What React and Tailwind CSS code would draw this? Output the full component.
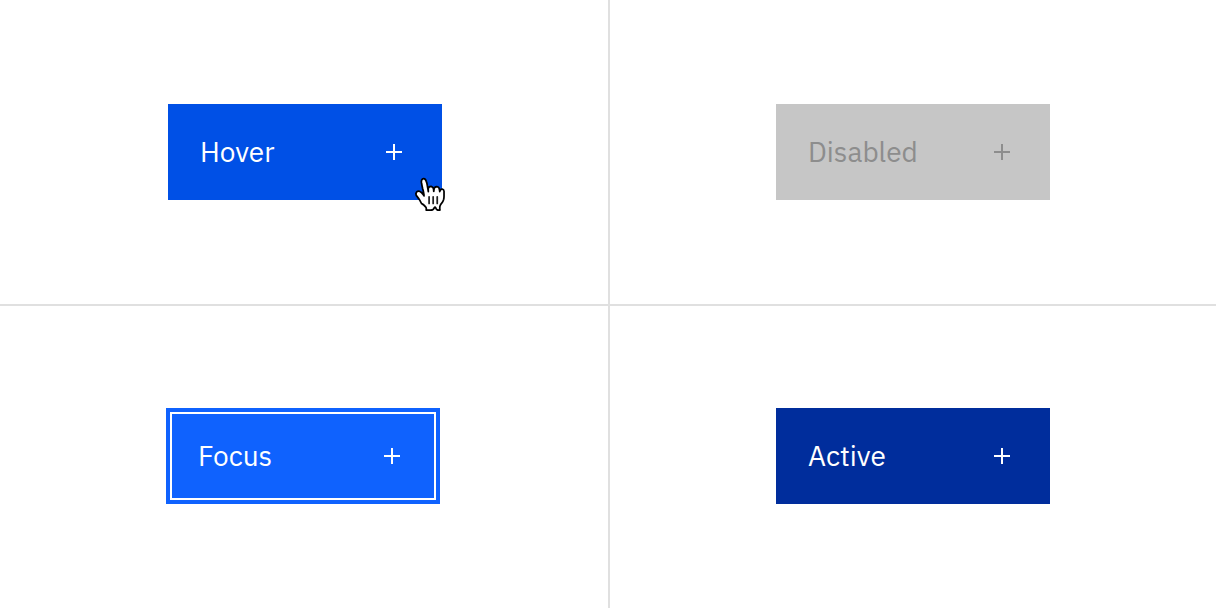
function PlusIcon() {
  return (
    <svg className="size-4 shrink-0" viewBox="0 0 16 16" fill="currentColor" aria-hidden="true">
      <path d="M7 0h2v7h7v2H9v7H7V9H0V7h7z" />
    </svg>
  );
}

function HandCursor() {
  return (
    <svg
      className="pointer-events-none absolute top-18 left-[247px] h-9 w-8"
      viewBox="8 7 16 18"
      fill="none"
      aria-hidden="true"
    >
      <g transform="translate(.3 -.3) scale(.97 1.03)">
        <path
          d="m11.3 20.4c-.3-.4-.6-1.1-1.2-2-.3-.5-1.2-1.5-1.5-1.9-.2-.4-.2-.6-.1-1 .1-.6.7-1.1 1.4-1.1.5 0 1 .4 1.4.7.2.2.5.6.7.8.2.2.2.3.4.5.2.3.3.5.2.1-.1-.5-.2-1.3-.4-2.1-.1-.6-.2-.7-.3-1.1-.1-.5-.2-.8-.3-1.3-.1-.3-.2-1.1-.3-1.5-.1-.5-.1-1.4.3-1.8.3-.3.9-.4 1.3-.2.5.3.8 1 .9 1.3.2.5.4 1.2.5 2 .2 1 .5 2.5.5 2.8 0-.4-.1-1.1 0-1.5.1-.3.3-.7.7-.8.3-.1.6-.1.9-.1.3.1.6.3.8.5.4.6.4 1.9.4 1.8.1-.4.1-1.2.3-1.6.1-.2.5-.4.7-.5.3-.1.7-.1 1 0 .2 0 .6.3.7.5.2.3.3 1.3.4 1.7 0 .1.1-.4.3-.7.4-.6 1.8-.8 1.9.6v1.1 1.2c0 .4-.1 1.3-.2 1.7-.1.3-.4 1-.7 1.4 0 0-1.1 1.2-1.2 1.8-.1.6-.1.6-.1 1s.1.9.1.9-.8.1-1.2 0-.9-.8-1-1.1c-.2-.3-.5-.3-.7 0-.2.4-.7 1.1-1.1 1.1-.7.1-2.1 0-3.1 0 0 0 .2-1-.2-1.4-.3-.3-.8-.8-1.1-1.1z"
          fill="#fff"
          stroke="#000"
          strokeWidth=".9"
          strokeLinejoin="round"
        />
        <path
          d="M19.4 17.2v3.2M17.3 17.2v3.2M15.2 17.2v3.2"
          stroke="#222"
          strokeWidth=".9"
          strokeLinecap="round"
        />
      </g>
    </svg>
  );
}

function StateButton({ label, className, disabled }) {
  return (
    <button
      type="button"
      disabled={disabled}
      className={`flex h-24 w-[274px] items-center justify-between pr-10 pl-8 text-[28px] leading-9 ${className}`}
    >
      <span>{label}</span>
      <PlusIcon />
    </button>
  );
}

export default function App() {
  return (
    <main className="grid min-h-screen grid-cols-2 grid-rows-2 bg-white font-['IBM_Plex_Sans',Roboto,sans-serif]">
      <section className="flex items-center justify-center pl-0.5">
        <div className="relative">
          <StateButton label="Hover" className="bg-[#0050e6] text-white" />
          <HandCursor />
        </div>
      </section>
      <section className="flex items-center justify-center border-l-2 border-[#e0e0e0]">
        <StateButton label="Disabled" disabled className="bg-[#c6c6c6] text-[#8d8d8d]" />
      </section>
      <section className="flex items-center justify-center pr-0.5 shadow-[inset_0_2px_0_#e0e0e0]">
        <StateButton
          label="Focus"
          className="bg-[#0f62fe] text-white shadow-[inset_0_0_0_4px_#0f62fe,inset_0_0_0_6px_#ffffff]"
        />
      </section>
      <section className="flex items-center justify-center border-l-2 border-[#e0e0e0] shadow-[inset_0_2px_0_#e0e0e0]">
        <StateButton label="Active" className="bg-[#002d9c] text-white" />
      </section>
    </main>
  );
}
